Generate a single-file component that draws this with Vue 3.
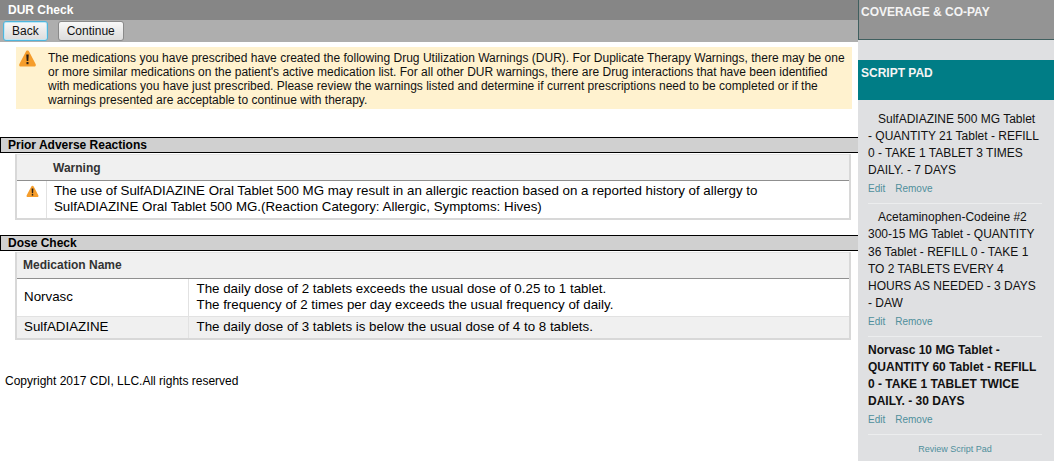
<template>
  <div class="page">
    <main class="main">
      <div class="title-bar">DUR Check</div>
      <div class="button-bar">
        <button class="btn btn-focus">Back</button>
        <button class="btn">Continue</button>
      </div>
      <div class="notice">
        <svg class="notice-icon" width="19" height="19" viewBox="0 0 19 19">
          <path d="M9.5 1.5c.8 0 1.3.5 1.7 1.2l6.4 12.2c.7 1.3 0 2.6-1.5 2.6H2.9c-1.5 0-2.2-1.3-1.5-2.6L7.8 2.7c.4-.7.9-1.2 1.7-1.2z" fill="#f59d2c" />
          <path d="M8.3 5.5h2.4l-.4 6.6H8.7z" fill="#2b2016" />
          <rect x="8.5" y="13" width="2" height="2.2" fill="#2b2016" />
        </svg>
        <p>{{ noticeText }}</p>
      </div>

      <div class="section-head first">Prior Adverse Reactions</div>
      <table class="grid warn-grid">
        <colgroup>
          <col class="icon-col" />
          <col />
        </colgroup>
        <thead>
          <tr><th></th><th>Warning</th></tr>
        </thead>
        <tbody>
          <tr>
            <td class="icon-cell">
              <svg width="13" height="13" viewBox="0 0 13 13">
                <path d="M6.5 .8c.5 0 .9.3 1.2.8l4.6 8.6c.5 1 0 1.9-1 1.9H1.7c-1 0-1.5-.9-1-1.9l4.6-8.6c.3-.5.7-.8 1.2-.8z" fill="#f59d2c" />
                <path d="M5.6 3.6h1.8l-.3 4.6H5.9z" fill="#2b2016" />
                <rect x="5.8" y="9" width="1.4" height="1.6" fill="#2b2016" />
              </svg>
            </td>
            <td>The use of SulfADIAZINE Oral Tablet 500 MG may result in an allergic reaction based on a reported history of allergy to<br />SulfADIAZINE Oral Tablet 500 MG.(Reaction Category: Allergic, Symptoms: Hives)</td>
          </tr>
        </tbody>
      </table>

      <div class="section-head second">Dose Check</div>
      <table class="grid dose-grid">
        <colgroup>
          <col class="name-col" />
          <col />
        </colgroup>
        <thead>
          <tr><th colspan="2">Medication Name</th></tr>
        </thead>
        <tbody>
          <tr v-for="row in doseRows" :key="row.name">
            <td>{{ row.name }}</td>
            <td><div v-for="line in row.lines" :key="line">{{ line }}</div></td>
          </tr>
        </tbody>
      </table>

      <div class="copyright">Copyright 2017 CDI, LLC.All rights reserved</div>
    </main>

    <aside class="side">
      <div class="coverage">COVERAGE &amp; CO-PAY</div>
      <div class="pad-head">SCRIPT PAD</div>
      <div class="pad-list">
        <div v-for="item in scripts" :key="item.text" class="pad-item">
          <div class="pad-text" :class="{ strong: item.strong, indented: !item.strong }">{{ item.text }}</div>
          <div class="pad-links"><a>Edit</a><a>Remove</a></div>
        </div>
      </div>
      <div class="review"><a>Review Script Pad</a></div>
    </aside>
  </div>
</template>

<script setup>
const noticeText = "The medications you have prescribed have created the following Drug Utilization Warnings (DUR). For Duplicate Therapy Warnings, there may be one or more similar medications on the patient's active medication list. For all other DUR warnings, there are Drug interactions that have been identified with medications you have just prescribed. Please review the warnings listed and determine if current prescriptions need to be completed or if the warnings presented are acceptable to continue with therapy."

const doseRows = [
  {
    name: 'Norvasc',
    lines: [
      'The daily dose of 2 tablets exceeds the usual dose of 0.25 to 1 tablet.',
      'The frequency of 2 times per day exceeds the usual frequency of daily.'
    ]
  },
  {
    name: 'SulfADIAZINE',
    lines: ['The daily dose of 3 tablets is below the usual dose of 4 to 8 tablets.']
  }
]

const scripts = [
  { text: 'SulfADIAZINE 500 MG Tablet - QUANTITY 21 Tablet - REFILL 0 - TAKE 1 TABLET 3 TIMES DAILY. - 7 DAYS' },
  { text: 'Acetaminophen-Codeine #2 300-15 MG Tablet - QUANTITY 36 Tablet - REFILL 0 - TAKE 1 TO 2 TABLETS EVERY 4 HOURS AS NEEDED - 3 DAYS - DAW' },
  { text: 'Norvasc 10 MG Tablet - QUANTITY 60 Tablet - REFILL 0 - TAKE 1 TABLET TWICE DAILY. - 30 DAYS', strong: true }
]
</script>

<style>
html, body {
  margin: 0;
  background: #fff;
}
</style>

<style scoped>
.page {
  display: flex;
  width: 1054px;
  height: 461px;
  overflow: hidden;
  font-family: "Liberation Sans", Arial, sans-serif;
  font-size: 12px;
  color: #000;
}

.main {
  width: 858px;
  flex-shrink: 0;
}

.title-bar {
  height: 20px;
  line-height: 20px;
  padding-left: 8px;
  background: #868686;
  color: #fff;
  font-weight: bold;
}

.button-bar {
  box-sizing: border-box;
  display: flex;
  gap: 10px;
  height: 22px;
  padding: 1px 0 0 3px;
  background: #aeaeae;
}

.btn {
  height: 20px;
  padding: 0 8px;
  border: 1px solid #8a8a8a;
  border-radius: 3px;
  background: linear-gradient(#f8f8f8, #dcdcdc);
  font-family: inherit;
  font-size: 12px;
  color: #111;
}

.btn-focus {
  border-color: #4fb6dd;
  box-shadow: inset 0 0 0 1px #bfe6f4;
}

.notice {
  display: flex;
  width: 836px;
  height: 62px;
  margin: 5px 0 0 16px;
  background: #fff2cf;
}

.notice-icon {
  flex-shrink: 0;
  margin: 2px 0 0 2px;
}

.notice p {
  margin: 4px 0 0 11px;
  width: 800px;
  line-height: 14px;
  color: #111;
}

.section-head {
  height: 14px;
  line-height: 14px;
  padding-left: 7px;
  border: 1px solid #000;
  border-right: 0;
  background: #d0d0d0;
  font-weight: bold;
}

.section-head.first {
  margin-top: 28px;
}

.section-head.second {
  margin-top: 15px;
}

.grid {
  width: 836px;
  margin: 1px 0 0 15px;
  border: 2px solid #d8d8d8;
  border-top: 1px solid #e4e4e4;
  border-collapse: collapse;
  table-layout: fixed;
}

.grid th {
  height: 25px;
  padding: 0 0 0 6px;
  background: #f0f0f0;
  border-bottom: 1px solid #8f8f8f;
  text-align: left;
  font-weight: bold;
  color: #333;
}

.grid td {
  padding: 0 0 0 8px;
  font-size: 13.33px;
  line-height: 16px;
  border-right: 1px solid #e2e2e2;
}

.grid td:last-child {
  border-right: 0;
}

.warn-grid th {
  padding-left: 7px;
}

.warn-grid td {
  padding-left: 7.4px;
}

.icon-col {
  width: 30px;
}

.warn-grid tbody tr {
  height: 38px;
}

.warn-grid .icon-cell {
  vertical-align: top;
  padding: 4px 0 0 9px;
}

.icon-cell svg {
  display: block;
}

.name-col {
  width: 172px;
}

.dose-grid td:first-child {
  padding-left: 7px;
}

.dose-grid tbody tr {
  height: 38px;
}

.dose-grid tbody tr:last-child {
  height: 23px;
  background: #f0f0f0;
}

.dose-grid tbody tr:first-child td {
  border-bottom: 1px solid #e2e2e2;
}

.copyright {
  margin: 34px 0 0 5px;
  line-height: 14px;
}

.side {
  display: flex;
  flex-direction: column;
  width: 196px;
  flex-shrink: 0;
  background: #dfe0e2;
}

.coverage {
  box-sizing: border-box;
  height: 40px;
  padding: 5px 0 0 2px;
  background: #949494;
  border: 1px solid #3f5f5f;
  border-right: 0;
  border-top: 0;
  color: #f4f4f4;
  font-weight: bold;
}

.pad-head {
  box-sizing: border-box;
  height: 40px;
  margin-top: 20px;
  padding: 6px 0 0 3px;
  background: #007d86;
  color: #f4f4f4;
  font-weight: bold;
}

.pad-list {
  padding: 11px 0 0 10px;
}

.pad-item {
  width: 174px;
  padding: 0 0 8px;
  margin-bottom: 5px;
  border-bottom: 1px solid #ecedee;
}

.pad-text {
  line-height: 17.1px;
  color: #111;
}

.pad-text.indented {
  text-indent: 10px;
}

.pad-text.strong {
  font-weight: bold;
}

.pad-links {
  display: flex;
  gap: 10px;
  margin-top: 4px;
  font-size: 10px;
  line-height: 12px;
}

.pad-links a,
.review a {
  color: #4f8f9c;
}

.review {
  width: 174px;
  margin: 3px 0 0 10px;
  text-align: center;
  font-size: 9px;
  line-height: 12px;
}
</style>
